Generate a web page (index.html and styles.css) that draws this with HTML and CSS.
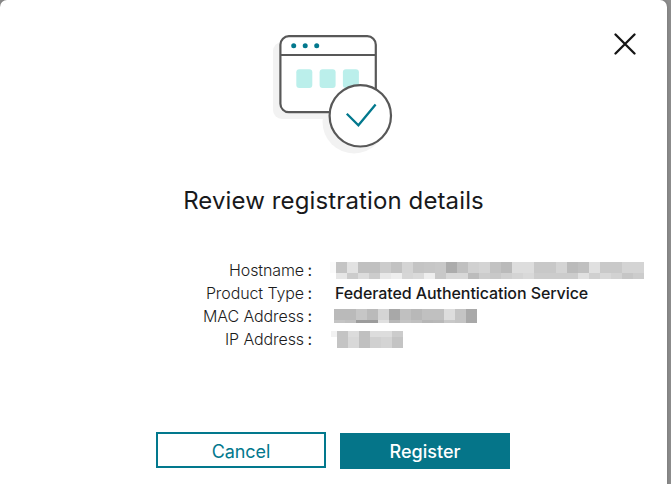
FILE: index.html
```html
<!DOCTYPE html>
<html lang="en">
<head>
<meta charset="utf-8">
<title>Review registration details</title>
<link rel="stylesheet" href="styles.css">
</head>
<body>
<main class="dialog">
  <button class="close" aria-label="Close">
    <svg width="22" height="22" viewBox="0 0 22 22"><path d="M1.5 1.5 20.5 20.5M20.5 1.5 1.5 20.5"/></svg>
  </button>
  <svg class="hero" width="126" height="124" viewBox="270 32 126 124">
    <rect class="shade" x="273" y="42" width="97" height="77" rx="9"/>
    <circle class="shade" cx="354" cy="122" r="31.5"/>
    <rect class="line" x="280.4" y="36.2" width="95.4" height="76" rx="8.5"/>
    <path class="line" d="M280.5 55H375.5"/>
    <g class="dots"><circle cx="293.7" cy="45.8" r="2.5"/><circle cx="305.2" cy="45.8" r="2.5"/><circle cx="316.7" cy="45.8" r="2.5"/></g>
    <g class="tiles"><rect x="296.3" y="69.2" width="16" height="18.8" rx="3"/><rect x="319.6" y="69.2" width="16" height="18.8" rx="3"/><rect x="342.9" y="69.2" width="16" height="18.8" rx="3"/></g>
    <circle class="line" cx="360.3" cy="115.8" r="30.7"/>
    <path class="tick" d="M346.8 113.8 358.4 125.2 375.6 104.5"/>
  </svg>
  <h1>Review registration details</h1>
  <dl class="details">
    <dt><span>Hostname</span><span class="colon">:</span></dt>
    <dd class="redacted lead" data-rows="11,6" data-cells="c4 e2 c0 c0 cc c2 d4 c4 c6 c8 ac c0 d0 d4 c2 ba dd dd c8 c8 d4 bb c0 e0 c9 c9 d4 d4|e6 cc dc cc e8 ee d6 da ee c8 d8 d8 bc cc c8 cf d4 d9 cc cc cc cc e0 d0 d8 d2 c6 cc"></dd>
    <dt><span>Product Type</span><span class="colon">:</span></dt>
    <dd class="value">Federated Authentication Service</dd>
    <dt><span>MAC Address</span><span class="colon">:</span></dt>
    <dd class="redacted address" data-rows="11,3" data-cells="ba ba c6 ba d4 a8 c0 b8 c0 c0 dd c4 a9|c4 c0 9c 9c e0 b8 c4 c0 b6 b8 c8 c4 a8"></dd>
    <dt><span>IP Address</span><span class="colon">:</span></dt>
    <dd class="redacted ip-value" data-rows="6,11" data-cells="c4 dc c0 dd dd cc|c4 d8 c0 d0 d4 c4"></dd>
  </dl>
  <div class="actions">
    <button class="btn cancel">Cancel</button>
    <button class="btn register">Register</button>
  </div>
</main>
<script src="script.js"></script>
</body>
</html>
```
FILE: styles.css
```css
* { box-sizing: border-box; }
body { margin: 0; width: 671px; height: 484px; overflow: hidden; background: #8e8e8e; font-family: Inter, "Liberation Sans", sans-serif; color: #18191b; }
button { font-family: inherit; padding: 0; }
.dialog { position: relative; width: 667px; height: 492px; background: #fff; border-radius: 7px; padding-top: 32px; box-shadow: 0 0 4px rgba(0, 0, 0, .2); }
.close { position: absolute; left: 614px; top: 33px; width: 22px; height: 22px; border: 0; background: none; }
.close svg { display: block; }
.close path { stroke: #151515; stroke-width: 2.3; stroke-linecap: round; fill: none; }
.hero { display: block; margin-left: 270px; }
.shade { fill: #f2f2f2; }
.line { fill: #fff; stroke: #585858; stroke-width: 2.2; }
.dots { fill: #02788d; }
.tiles { fill: #bbefeb; }
.tick { fill: none; stroke: #02788d; stroke-width: 2.3; }
h1 { margin: 29px 0 0; height: 32px; line-height: 32px; font-size: 24px; font-weight: 400; text-align: center; white-space: nowrap; letter-spacing: .12px; }
.details { margin: 42px 0 0; display: grid; grid-template-columns: 312px 1fr; grid-auto-rows: 23px; column-gap: 23px; font-size: 16px; line-height: 23px; white-space: nowrap; }
dt { display: flex; justify-content: flex-end; font-weight: 300; color: #1c1c1c; letter-spacing: -.1px; }
.colon { width: 8px; text-align: right; font-weight: 400; }
dd { margin: 0; }
.value { font-weight: 500; letter-spacing: -.08px; }
.redacted { display: grid; grid-auto-columns: 11px; align-content: start; position: relative; }
.lead { padding: 3px 0 0 1px; }
.address { padding-top: 4px; margin-left: -1px; }
.ip-value { padding: 3px 0 0 2px; }
.ip-value::before { content: ""; position: absolute; left: -4px; top: 3px; width: 6px; height: 6px; background: #f2f2f2; }
.lead::before { content: ""; position: absolute; left: -5px; top: 3px; width: 6px; height: 11px; background: #fafafa; }
.actions { display: flex; gap: 14px; margin: 81px 0 0 156px; }
.btn { width: 170px; height: 36px; font-size: 18px; line-height: 32px; }
.cancel { background: #fff; color: #02788d; border: 2px solid #02788d; font-weight: 400; letter-spacing: -.1px; padding-top: 2px; }
.register { background: #057589; color: #fff; border: 0; font-weight: 500; margin-top: 1px; padding-top: 1px; }
```
FILE: script.js
```js
document.querySelectorAll('.redacted').forEach(function (box) {
  box.style.gridTemplateRows = box.dataset.rows.split(',').map(function (h) { return h + 'px'; }).join(' ');
  box.dataset.cells.split('|').forEach(function (row, r) {
    row.split(' ').forEach(function (tone, c) {
      var cell = document.createElement('i');
      cell.style.gridRow = r + 1;
      cell.style.gridColumn = c + 1;
      cell.style.background = '#' + tone + tone + tone;
      box.appendChild(cell);
    });
  });
});
```
